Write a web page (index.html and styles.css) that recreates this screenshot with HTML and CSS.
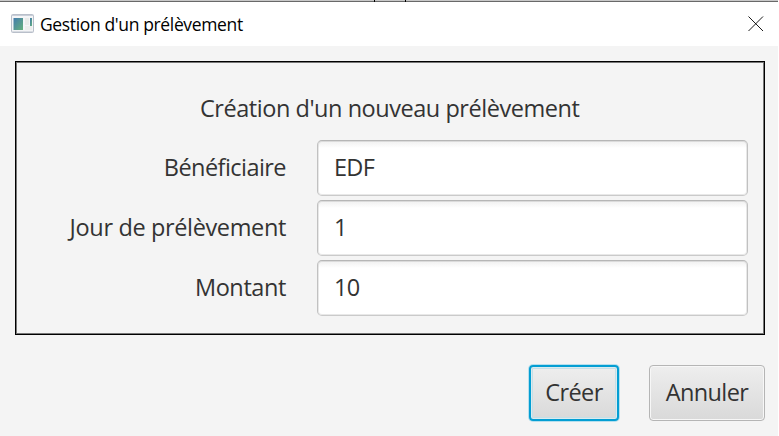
FILE: index.html
```html
<!DOCTYPE html>
<html lang="fr">
<head>
<meta charset="utf-8">
<title>Gestion d'un prélèvement</title>
<link rel="stylesheet" href="styles.css">
</head>
<body>
<div class="window">
  <div class="edge"><i class="tick"></i><i class="tick"></i></div>
  <header class="titlebar">
    <svg class="app-icon" width="23" height="19" viewBox="0 0 23 19">
      <defs><linearGradient id="pane" x1="0" y1="0" x2="1" y2="1"><stop offset="0" stop-color="#437bad"/><stop offset="1" stop-color="#65b17c"/></linearGradient></defs>
      <rect x=".5" y=".5" width="22" height="18" rx="1" fill="#f4f5f7" stroke="#b9bfca"/>
      <path d="M1 1.5H22" stroke="#c8ced8"/><path d="M1 17.5H22" stroke="#d8dce2"/>
      <rect x="2.5" y="4" width="9.5" height="12" fill="url(#pane)"/>
      <rect x="14" y="4" width="4" height="7" fill="#e9ebe9"/><rect x="14" y="12" width="7" height="4" fill="#eceeec"/>
      <rect x="19" y="4" width="2" height="8" fill="url(#pane)"/>
    </svg>
    <span class="caption">Gestion d'un prélèvement</span>
    <svg class="close" width="16" height="16" viewBox="0 0 16 16"><path d="M.5 .5L15 15M15 .5L.5 15" stroke="#000" stroke-width=".9"/></svg>
  </header>
  <main class="content">
    <section class="form">
      <h1 class="heading"><span>Création d'un nouveau prélèvement</span></h1>
      <label class="label tight" for="b">Bénéficiaire</label><input class="field" id="b" value="EDF">
      <label class="label wide" for="j">Jour de prélèvement</label><input class="field" id="j" value="1">
      <label class="label" for="m">Montant</label><input class="field" id="m" value="10">
    </section>
    <footer class="actions">
      <button class="button primary">Créer</button>
      <button class="button cancel">Annuler</button>
    </footer>
  </main>
</div>
</body>
</html>
```
FILE: styles.css
```css
* { box-sizing: border-box; }
body {
  margin: 0;
  background: #fff;
  overflow: hidden;
  font-family: "Open Sans", "Noto Sans", sans-serif;
  color: #333;
}
.window {
  width: 778px;
  height: 436px;
  display: flex;
  flex-direction: column;
  background: #f4f4f4;
}
.edge {
  height: 2px;
  flex: none;
  display: flex;
  gap: 30px;
  padding-left: 374px;
  background: linear-gradient(#c8c8c8 50%, #696969 50%);
}
.tick { width: 1px; background: #000; }
.titlebar {
  height: 44px;
  flex: none;
  display: flex;
  align-items: center;
  padding: 0 14px 2px 11px;
  background: #fff;
  color: #000;
}
.caption {
  margin-left: 6px;
  font-size: 17.5px;
  line-height: 24px;
  letter-spacing: -0.36px;
  white-space: nowrap;
  padding-top: 2px;
}
.close { margin: 2px 0 0 auto; }
.content { padding: 15px 13px 0 15px; }
.form {
  height: 274px;
  border: 1px solid #000;
  box-shadow: inset 0 0 0 1px #777;
  display: grid;
  grid-template-columns: 271px 431px;
  grid-template-rows: 56px 56px 56px 56px;
  column-gap: 30px;
  row-gap: 4px;
  padding-top: 18px;
  font-size: 23.5px;
}
.heading {
  grid-column: 1 / -1;
  margin: 0;
  padding-left: 184px;
  font-size: 23.5px;
  font-weight: 400;
  line-height: 56px;
  letter-spacing: -0.46px;
  white-space: nowrap;
}
.label {
  line-height: 54px;
  padding-right: 1px;
  text-align: right;
  letter-spacing: -0.4px;
  white-space: nowrap;
}
.tight { letter-spacing: -0.55px; }
.wide { letter-spacing: -0.36px; }
.field {
  width: 431px;
  height: 56px;
  border: 1px solid #c8c8c8;
  border-color: #b6b6b6 #c1c1c1 #cacaca;
  border-radius: 5px;
  padding: 0 16px 2px;
  background: linear-gradient(#f0f0f0, #fff 7px);
  box-shadow: inset 0 0 0 1px rgba(0, 0, 0, .09);
  font: inherit;
  color: inherit;
  letter-spacing: -0.7px;
  outline: none;
}
.actions {
  display: flex;
  justify-content: flex-end;
  gap: 30px;
  margin-top: 30px;
}
.button {
  height: 56px;
  padding: 0 0 2px;
  border: 1px solid #b5b5b5;
  border-radius: 4px;
  background: linear-gradient(#eee, #d9d9d9);
  box-shadow: inset 0 0 0 1px #f7f7f7;
  font: 23.5px "Open Sans", "Noto Sans", sans-serif;
  letter-spacing: -0.6px;
  color: #333;
}
.primary {
  width: 90px;
  border: 2px solid #039ed3;
  box-shadow: 0 0 0 1px #b5dfed, inset 0 0 0 1px #dceaee, inset 0 0 0 2px #c4dfe7;
}
.cancel { width: 116px; }
```
